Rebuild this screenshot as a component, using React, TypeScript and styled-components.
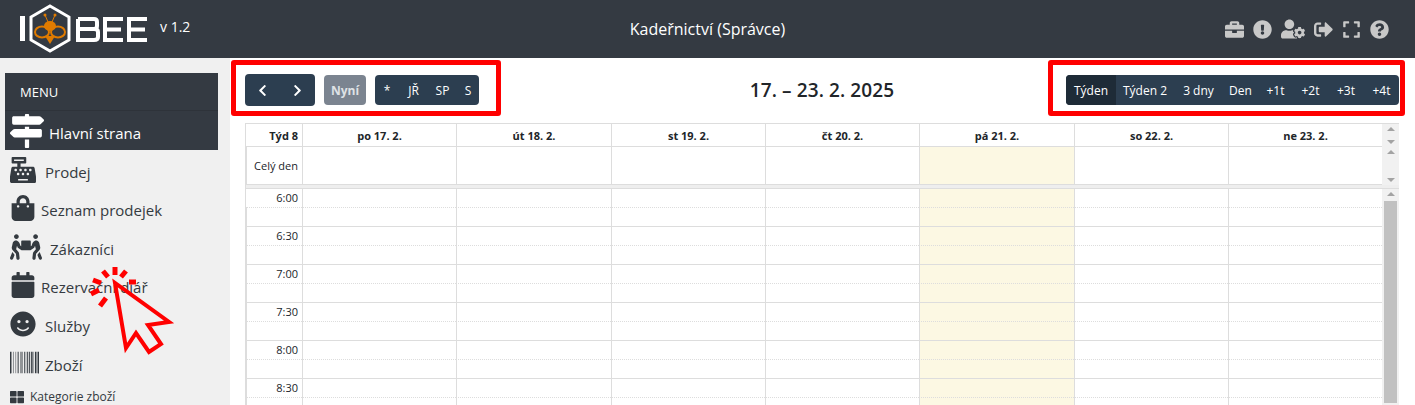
import React from "react"
import styled, { createGlobalStyle } from "styled-components"
import {
  FaBarcode, FaBriefcase, FaCalendar, FaCashRegister, FaChevronLeft, FaChevronRight,
  FaExclamationCircle, FaExpand, FaMapSigns, FaPeopleCarry, FaQuestionCircle,
  FaShoppingBag, FaSignOutAlt, FaSmile, FaThLarge, FaUserCog,
} from "react-icons/fa"

const DAYS = ["po 17. 2.", "út 18. 2.", "st 19. 2.", "čt 20. 2.", "pá 21. 2.", "so 22. 2.", "ne 23. 2."]
const TODAY = 4
const SLOTS = ["6:00", "6:30", "7:00", "7:30", "8:00", "8:30"]
const VIEWS = ["Týden", "Týden 2", "3 dny", "Den", "+1t", "+2t", "+3t", "+4t"]
const AXIS = "56px"
const COLS = `${AXIS} 154px 155px 154px 154px 155px 154px 154px`

const MENU = [
  { label: "Prodej", icon: <FaCashRegister size={26} />, gap: 9, height: 39 },
  { label: "Seznam prodejek", icon: <FaShoppingBag size={26} />, gap: 5, height: 38 },
  { label: "Zákazníci", icon: <FaPeopleCarry size={32} />, gap: 8, height: 39 },
  { label: "Rezervační diář", icon: <FaCalendar size={26} />, gap: 5, height: 38 },
  { label: "Služby", icon: <FaSmile size={26} />, gap: 9, height: 39 },
  { label: "Zboží", icon: <FaBarcode size={29} />, gap: 6, height: 39 },
]

const Global = createGlobalStyle`
  html, body { margin: 0; padding: 0; height: 100%; overflow: hidden; background: #fff; }
  body { font-family: "Open Sans", "Liberation Sans", sans-serif; color: #212529; }
`

const Page = styled.div`
  position: relative;
  width: 1415px;
  height: 405px;
  overflow: hidden;
`

const Header = styled.header`
  height: 58px;
  background: #343a42;
  color: #fff;
  display: grid;
  grid-template-columns: 1fr auto 1fr;
  align-items: center;
`

const Brand = styled.div`
  display: flex;
  align-items: center;
  padding-left: 19px;
`

const Version = styled.span`
  font-size: 14px;
  margin: 0 0 5px 11px;
`

const Title = styled.div`
  font-size: 16px;
  padding-bottom: 1px;
`

const HeaderIcons = styled.div`
  display: flex;
  justify-content: flex-end;
  align-items: center;
  gap: 9px;
  padding-right: 26px;
  color: #c8c8c8;
  font-size: 19px;
`

const Body = styled.div`
  display: flex;
  height: 347px;
`

const Sidebar = styled.aside`
  width: 230px;
  flex: none;
  background: #f0f0f0;
  padding: 15px 12px 0 5px;
  box-sizing: border-box;
  overflow: hidden;
`

const MenuTitle = styled.div`
  height: 38px;
  background: #343a42;
  border-bottom: 1px solid #2e333a;
  box-sizing: border-box;
  color: #fff;
  font-size: 13px;
  line-height: 38px;
  padding-left: 15px;
`

const MenuItem = styled.div<{ $active?: boolean; $gap: number; $height: number }>`
  height: ${(p) => p.$height}px;
  display: flex;
  align-items: center;
  gap: ${(p) => p.$gap}px;
  padding-left: 5px;
  font-size: 15px;
  white-space: nowrap;
  background: ${(p) => (p.$active ? "#343a42" : "transparent")};
  color: ${(p) => (p.$active ? "#fff" : "#343a40")};
  svg { flex: none; }
  span { padding-top: 4px; }
`

const SubItem = styled.div`
  display: flex;
  align-items: center;
  gap: 6px;
  padding: 6px 0 0 5px;
  font-size: 12px;
  color: #343a40;
`

const Main = styled.main`
  flex: 1;
  padding: 16px 16px 0 15px;
  min-width: 0;
`

const Toolbar = styled.div`
  display: grid;
  grid-template-columns: 1fr auto 1fr;
  align-items: center;
  height: 31px;
  margin-bottom: 18px;
`

const ToolLeft = styled.div`
  display: flex;
  align-items: center;
  gap: 9px;
`

const ToolRight = styled.div`
  display: flex;
  justify-content: flex-end;
  padding-right: -2px;
`

const DateTitle = styled.h2`
  margin: 0;
  font-size: 19px;
  font-weight: 600;
  color: #212529;
  letter-spacing: 0.1px;
`

const Group = styled.div`
  display: flex;
  height: 30px;
  border-radius: 4px;
  overflow: hidden;
  background: #2c3e50;
`

const ArrowGroup = styled(Group)`
  height: 32px;
`

const Btn = styled.button<{ $active?: boolean; $width: number }>`
  width: ${(p) => p.$width}px;
  border: 0;
  padding: 0;
  font: 500 12px "Open Sans", sans-serif;
  color: #fff;
  display: flex;
  align-items: center;
  justify-content: center;
  background: ${(p) => (p.$active ? "#1e2b37" : "transparent")};
`

const NowBtn = styled(Group)`
  width: 42px;
  align-items: center;
  justify-content: center;
  background: #7b8490;
  color: #dfe2e5;
  font-size: 12px;
  font-weight: 700;
`

const Calendar = styled.div`
  width: 1154px;
  border: 1px solid #ddd;
  border-bottom: 0;
  box-sizing: border-box;
  position: relative;
  font-size: 11px;
  display: grid;
  grid-template-columns: 1fr 17px;
`

const Grid = styled.div`
  display: grid;
  grid-template-columns: ${COLS};
`

const Cell = styled.div<{ $today?: boolean; $height?: number; $dotted?: boolean }>`
  box-sizing: border-box;
  height: ${(p) => p.$height ?? 19}px;
  border-left: 1px solid #ddd;
  border-bottom: 1px ${(p) => (p.$dotted ? "dotted" : "solid")} #ddd;
  background: ${(p) => (p.$today ? "#fcf8e3" : "transparent")};
  &:first-child { border-left: 0; }
`

const HeadCell = styled(Cell)`
  font-weight: 700;
  text-align: center;
  line-height: 23px;
`

const AxisCell = styled(Cell)`
  text-align: right;
  padding-right: 4px;
  line-height: 18px;
`

const AxisHead = styled(AxisCell)`
  font-weight: 700;
  line-height: 23px;
`

const AllDayLabel = styled(AxisCell)`
  line-height: 38px;
`

const Divider = styled.div`
  height: 4px;
  background: #eee;
  border-bottom: 1px solid #ddd;
  box-sizing: border-box;
`

const DividerFill = styled(Divider)`
  height: 4px;
`

const ScrollTrack = styled.div<{ $height: number }>`
  height: ${(p) => p.$height}px;
  background: #f1f1f1;
  display: flex;
  flex-direction: column;
  align-items: center;
  justify-content: space-between;
  padding: 3px 0;
  box-sizing: border-box;
`

const ScrollBody = styled(ScrollTrack)`
  justify-content: flex-start;
  padding-top: 3px;
  gap: 0;
`

const Thumb = styled.div`
  width: 13px;
  flex: 1;
  margin-top: 5px;
  background: #c1c1c1;
`

const Caret = styled.i<{ $down?: boolean }>`
  width: 0;
  height: 0;
  border-left: 4px solid transparent;
  border-right: 4px solid transparent;
  ${(p) => (p.$down ? "border-top: 4px solid #a3a3a3;" : "border-bottom: 4px solid #a3a3a3;")}
`

const Highlight = styled.div<{ $x: number; $w: number }>`
  position: absolute;
  left: ${(p) => p.$x}px;
  top: 60px;
  width: ${(p) => p.$w}px;
  height: 56px;
  box-sizing: border-box;
  border: 5px solid #ff0000;
  border-radius: 3px;
  pointer-events: none;
`

const Pointer = styled.svg`
  position: absolute;
  left: 88px;
  top: 262px;
  pointer-events: none;
`

const Logo = () => (
  <svg width="130" height="52" viewBox="0 0 130 52" style={{ display: "block" }}>
    <rect x="1" y="13" width="5" height="25" fill="#fff" />
    <path d="M31 3 L50 14 L50 37 L31 48 L12 37 L12 14 Z" fill="none" stroke="#fff" strokeWidth="3" />
    <g fill="#e07b00">
      <ellipse cx="31" cy="23" rx="6" ry="5" />
      <circle cx="26" cy="12" r="1.5" />
      <circle cx="36" cy="12" r="1.5" />
      <path d="M26 12 L29 19 M36 12 L33 19" stroke="#e07b00" strokeWidth="1" />
      <path d="M26 33 H36 L31 41 Z" />
    </g>
    <g fill="none" stroke="#e07b00" strokeWidth="2">
      <ellipse cx="23" cy="29" rx="7" ry="5.5" />
      <ellipse cx="39" cy="29" rx="7" ry="5.5" />
    </g>
    <g fill="none" stroke="#fff" strokeWidth="4">
      <path d="M59 16 H75 Q78 16 78 19 V23 Q78 26 75 26 H59 M75 26 Q79 26 79 29 V34 Q79 37 75 37 H59 V16" />
      <path d="M104 16 H86 V37 H104 M86 26.5 H102" />
      <path d="M128 16 H110 V37 H128 M110 26.5 H126" />
    </g>
  </svg>
)

export default function App() {
  return (
    <Page>
      <Global />
      <Header>
        <Brand>
          <Logo />
          <Version>v 1.2</Version>
        </Brand>
        <Title>Kadeřnictví (Správce)</Title>
        <HeaderIcons>
          <FaBriefcase />
          <FaExclamationCircle />
          <FaUserCog size={24} />
          <FaSignOutAlt />
          <FaExpand />
          <FaQuestionCircle />
        </HeaderIcons>
      </Header>
      <Body>
        <Sidebar>
          <MenuTitle>MENU</MenuTitle>
          <MenuItem $active $gap={5} $height={39}>
            <FaMapSigns size={34} />
            <span>Hlavní strana</span>
          </MenuItem>
          {MENU.map((m) => (
            <MenuItem key={m.label} $gap={m.gap} $height={m.height}>
              {m.icon}
              <span>{m.label}</span>
            </MenuItem>
          ))}
          <SubItem>
            <FaThLarge size={14} />
            <span>Kategorie zboží</span>
          </SubItem>
        </Sidebar>
        <Main>
          <Toolbar>
            <ToolLeft>
              <ArrowGroup>
                <Btn $width={35}><FaChevronLeft size={13} /></Btn>
                <Btn $width={35}><FaChevronRight size={13} /></Btn>
              </ArrowGroup>
              <NowBtn>Nyní</NowBtn>
              <Group>
                <Btn $width={24}>*</Btn>
                <Btn $width={29}>JŘ</Btn>
                <Btn $width={29}>SP</Btn>
                <Btn $width={22}>S</Btn>
              </Group>
            </ToolLeft>
            <DateTitle>17. – 23. 2. 2025</DateTitle>
            <ToolRight>
              <Group>
                {VIEWS.map((v, i) => (
                  <Btn key={v} $active={i === 0} $width={[50, 58, 49, 35, 35, 35, 36, 35][i]}>{v}</Btn>
                ))}
              </Group>
            </ToolRight>
          </Toolbar>
          <Calendar>
            <div>
              <Grid>
                <AxisHead $height={23}>Týd 8</AxisHead>
                {DAYS.map((d) => <HeadCell key={d} $height={23}>{d}</HeadCell>)}
                <AllDayLabel $height={38}>Celý den</AllDayLabel>
                {DAYS.map((d, i) => <Cell key={d} $height={38} $today={i === TODAY} />)}
              </Grid>
              <DividerFill />
              <Grid>
                {SLOTS.map((s) => (
                  <React.Fragment key={s}>
                    <AxisCell $dotted>{s}</AxisCell>
                    {DAYS.map((d, i) => <Cell key={d} $dotted $today={i === TODAY} />)}
                    <AxisCell />
                    {DAYS.map((d, i) => <Cell key={d} $today={i === TODAY} />)}
                  </React.Fragment>
                ))}
              </Grid>
            </div>
            <div>
              <ScrollTrack $height={23}><Caret /><Caret $down /></ScrollTrack>
              <ScrollTrack $height={38}><Caret /><Caret $down /></ScrollTrack>
              <Divider />
              <ScrollBody $height={217}><Caret /><Thumb /></ScrollBody>
            </div>
          </Calendar>
        </Main>
      </Body>
      <Highlight $x={231} $w={270} />
      <Highlight $x={1048} $w={357} />
      <Pointer width="90" height="100" viewBox="0 0 90 100">
        <g stroke="#ff0000" strokeWidth="5" fill="none">
          <path d="M27 5 V13 M15 9 L20 15 M38 9 L33 15 M5 18 L13 21 M48 20 H41 M3 32 L11 28 M12 44 L18 36" />
          <path d="M27 21 L38 86 L48 71 L61 90 L73 82 L60 63 L81 60 Z" strokeWidth="4" />
        </g>
      </Pointer>
    </Page>
  )
}
